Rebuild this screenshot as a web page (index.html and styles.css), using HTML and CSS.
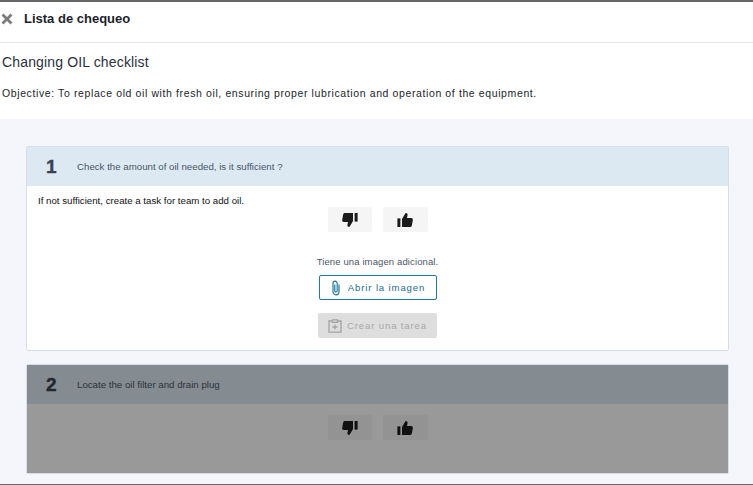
FILE: index.html
```html
<!DOCTYPE html>
<html lang="es">
<head>
<meta charset="utf-8">
<title>Lista de chequeo</title>
<link rel="stylesheet" href="styles.css">
</head>
<body>
<div class="page">
  <header class="topbar">
    <svg class="close" viewBox="0 0 12 12" width="12" height="12"><path d="M1.5 1.5l9 9M10.5 1.5l-9 9" stroke="#7b7b7b" stroke-width="2.8" fill="none"/></svg>
    <h1 class="topbar-title">Lista de chequeo</h1>
  </header>
  <section class="intro">
    <h2 class="intro-title">Changing OIL checklist</h2>
    <p class="intro-text">Objective: To replace old oil with fresh oil, ensuring proper lubrication and operation of the equipment.</p>
  </section>
  <main class="list">
    <article class="card">
      <div class="card-head"><span class="num">1</span><span class="question">Check the amount of oil needed, is it sufficient ?</span></div>
      <div class="card-body">
        <p class="note">If not sufficient, create a task for team to add oil.</p>
        <div class="votes">
          <button class="vote vote-down"><svg viewBox="0 0 16 16" width="16" height="16"><path d="M1.2 2.2C1.5 1.4 2.2 1 3 1H11V9L7.6 14.8C6.4 15.2 5.2 14.2 5.4 13L6 10H1.8C0.7 10 -0.1 9 0.2 7.8z" fill="#1c1c1c"/><rect x="12.6" y="1" width="3" height="8.6" fill="#1c1c1c"/></svg></button>
          <button class="vote vote-up"><svg viewBox="0 0 16 16" width="16" height="16"><path d="M14.8 13.8C14.5 14.6 13.8 15 13 15H5V7L8.4 1.2C9.6 0.8 10.8 1.8 10.6 3L10 6H14.2C15.3 6 16.1 7 15.8 8.2z" fill="#1c1c1c"/><rect x="0.4" y="6.4" width="3" height="8.6" fill="#1c1c1c"/></svg></button>
        </div>
        <p class="extra">Tiene una imagen adicional.</p>
        <button class="btn btn-open">
          <svg viewBox="0 0 10 16" width="10" height="16"><path d="M8 4.5V11.5C8 13.4 6.8 14.8 5 14.8S2 13.4 2 11.5V3.6C2 2.2 2.9 1.2 4.1 1.2S6.2 2.2 6.2 3.6V10.8C6.2 11.5 5.7 12 5 12S3.8 11.5 3.8 10.8V4.5" fill="none" stroke="#1f7a9c" stroke-width="1.2"/></svg>
          Abrir la imagen
        </button>
        <button class="btn btn-task">
          <svg viewBox="0 0 14 14" width="14" height="14"><path d="M4.5 2H1V13.2H13V2H9.5M4.5 0.8H9.5V3.4H4.5zM7 5.5V10.5M4.5 8H9.5" fill="none" stroke="#a3a3a3" stroke-width="1.3"/></svg>
          Crear una tarea
        </button>
      </div>
    </article>
    <article class="card card-disabled">
      <div class="card-head"><span class="num">2</span><span class="question">Locate the oil filter and drain plug</span></div>
      <div class="card-body card-body-short">
        <div class="votes">
          <button class="vote vote-down"><svg viewBox="0 0 16 16" width="16" height="16"><path d="M1.2 2.2C1.5 1.4 2.2 1 3 1H11V9L7.6 14.8C6.4 15.2 5.2 14.2 5.4 13L6 10H1.8C0.7 10 -0.1 9 0.2 7.8z" fill="#1c1c1c"/><rect x="12.6" y="1" width="3" height="8.6" fill="#1c1c1c"/></svg></button>
          <button class="vote vote-up"><svg viewBox="0 0 16 16" width="16" height="16"><path d="M14.8 13.8C14.5 14.6 13.8 15 13 15H5V7L8.4 1.2C9.6 0.8 10.8 1.8 10.6 3L10 6H14.2C15.3 6 16.1 7 15.8 8.2z" fill="#1c1c1c"/><rect x="0.4" y="6.4" width="3" height="8.6" fill="#1c1c1c"/></svg></button>
        </div>
      </div>
      <div class="veil"></div>
    </article>
  </main>
</div>
</body>
</html>
```
FILE: styles.css
```css
* { box-sizing: border-box; }
html, body { margin: 0; height: 100%; overflow: hidden; }
body { font-family: "Liberation Sans", Arial, sans-serif; background: #fff; color: #1f2430; }
.page { height: 485px; display: flex; flex-direction: column; border-top: 2px solid #666; border-bottom: 1px solid #666; }
.topbar { height: 41px; flex: none; display: flex; align-items: center; gap: 11px; padding: 0 0 7px 1px; border-bottom: 1px solid #e6e6e6; }
.topbar-title { margin: 0; font-size: 13px; font-weight: 700; color: #1c1f2b; }
.intro { height: 76px; flex: none; padding: 11px 2px 0; }
.intro-title { margin: 0; font-size: 14px; font-weight: 400; line-height: 16px; color: #2b3040; letter-spacing: 0.15px; }
.intro-text { margin: 16px 0 0; font-size: 10.5px; line-height: 14px; letter-spacing: 0.61px; color: #1a1e2a; }
.list { flex: 1; background: #f4f6fb; padding: 27px 24px 0 26px; display: flex; flex-direction: column; gap: 13px; overflow: hidden; }
.card { position: relative; flex: none; background: #fff; border: 1px solid #d8dde8; border-radius: 2px; }
.card-head { height: 39px; background: #dce9f3; display: flex; align-items: center; padding-left: 19px; }
.num { width: 31px; font-size: 19px; font-weight: 700; color: #39414f; -webkit-text-stroke: 0.4px #39414f; }
.question { font-size: 9.7px; color: #4b5566; }
.card-body { height: 164px; display: flex; flex-direction: column; align-items: center; position: relative; padding-top: 21px; }
.card-body-short { height: 69px; padding-top: 11px; }
.note { position: absolute; left: 11px; top: 9px; margin: 0; font-size: 9.7px; line-height: 12px; color: #111; }
.votes { display: flex; gap: 11px; margin-left: 1px; }
.vote { width: 45px; height: 25px; border: 0; border-radius: 2px; background: #f5f5f5; display: flex; align-items: center; justify-content: center; padding: 0; }
.vote-down { width: 44px; }
.vote-up svg { margin-right: 2px; }
.vote svg { width: 16px; height: 16px; }
.extra { margin: 24px 0 0; font-size: 9.5px; line-height: 11px; color: #4b5566; letter-spacing: 0.12px; }
.btn { height: 25px; display: flex; align-items: center; justify-content: center; gap: 7px; border-radius: 2px; font-family: inherit; font-size: 9.6px; letter-spacing: 0.85px; padding: 0; }
.btn-open { width: 118px; margin: 8px 0 0 1px; background: #fff; border: 1px solid #1f7a9c; color: #1b6d94; }
.btn-task { width: 119px; margin-top: 13px; gap: 5px; background: #dedede; border: 0; color: #a8a8a8; }
.veil { position: absolute; inset: 0; background: rgba(0, 0, 0, 0.4); }
```
